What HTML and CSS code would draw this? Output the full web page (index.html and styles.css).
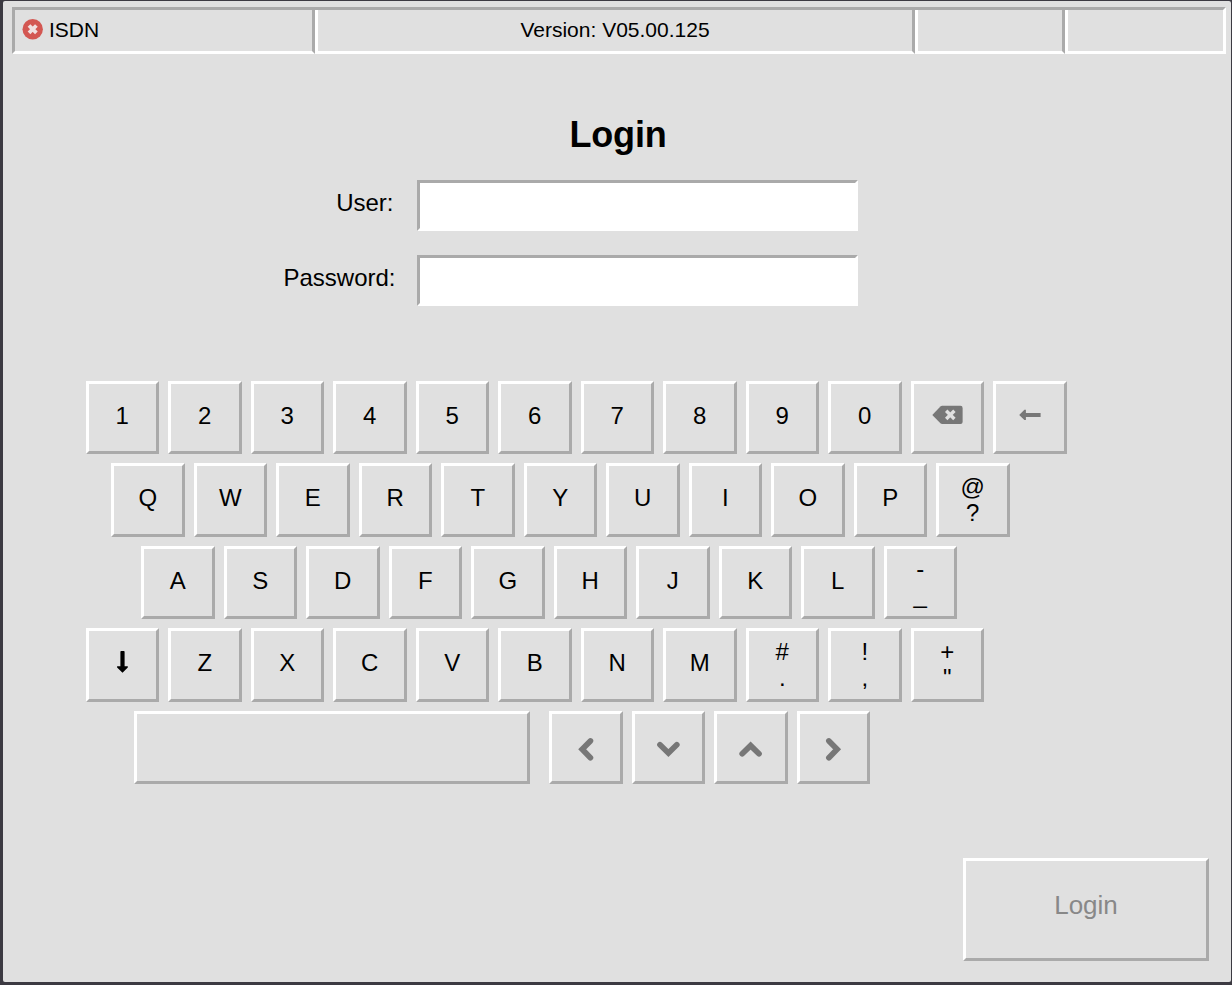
FILE: index.html
```html
<!DOCTYPE html>
<html lang="en">
<head>
<meta charset="utf-8">
<title>Login</title>
<link rel="stylesheet" href="styles.css">
</head>
<body>
<main class="panel">
  <header class="status">
    <div class="cell cell-line">
      <svg class="status-icon" width="21" height="21" viewBox="0 0 21 21"><circle cx="10.7" cy="10.2" r="10.2" fill="#d35752"/><path d="M7 6.5l7.4 7.4M14.4 6.5l-7.4 7.4" stroke="#f0e0e0" stroke-width="3.8"/></svg>
      <span>ISDN</span>
    </div>
    <div class="cell cell-version">Version: V05.00.125</div>
    <div class="cell cell-small"></div>
    <div class="cell cell-last"></div>
  </header>

  <h1 class="title">Login</h1>

  <form class="form">
    <label class="label label-user" for="user">User:</label>
    <input class="field" id="user" type="text">
    <label class="label" for="password">Password:</label>
    <input class="field" id="password" type="password">
  </form>

  <section class="keyboard">
    <div class="row">
      <button class="key">1</button><button class="key">2</button><button class="key">3</button><button class="key">4</button><button class="key">5</button><button class="key">6</button><button class="key">7</button><button class="key">8</button><button class="key">9</button><button class="key">0</button>
      <button class="key key-icon" aria-label="Backspace"><svg class="icon" viewBox="0 0 67 67"><path d="M18.3 30.9L26.4 22.5Q27.2 21.8 28.2 21.8H46.5Q48.6 21.8 48.6 23.9V37.9Q48.6 40 46.5 40H28.2Q27.2 40 26.4 39.3Z" fill="#777"/><path d="M32.2 26.8l8.2 8.2M40.4 26.8l-8.2 8.2" stroke="#e0e0e0" stroke-width="3.4"/></svg></button>
      <button class="key key-icon" aria-label="Enter"><svg class="icon" viewBox="0 0 67 67"><path d="M23.2 30.9L28.4 25.8H29.9V29H44.6V33H29.9V36.1H28.4Z" fill="#777"/></svg></button>
    </div>
    <div class="row row-q">
      <button class="key">Q</button><button class="key">W</button><button class="key">E</button><button class="key">R</button><button class="key">T</button><button class="key">Y</button><button class="key">U</button><button class="key">I</button><button class="key">O</button><button class="key">P</button>
      <button class="key key-dual"><span>@</span><span>?</span></button>
    </div>
    <div class="row row-a">
      <button class="key">A</button><button class="key">S</button><button class="key">D</button><button class="key">F</button><button class="key">G</button><button class="key">H</button><button class="key">J</button><button class="key">K</button><button class="key">L</button>
      <button class="key key-dual"><span>-</span><span>_</span></button>
    </div>
    <div class="row">
      <button class="key key-icon" aria-label="Shift"><svg class="icon" viewBox="0 0 67 67"><path d="M31.4 20.8Q31.4 20 32.2 20H34.8Q35.6 20 35.6 20.8V35.2H38.8V36.6L33.5 41.7L28.1 36.6V35.2H31.4Z" fill="#000"/></svg></button>
      <button class="key">Z</button><button class="key">X</button><button class="key">C</button><button class="key">V</button><button class="key">B</button><button class="key">N</button><button class="key">M</button>
      <button class="key key-dual"><span>#</span><span>.</span></button>
      <button class="key key-dual"><span>!</span><span>,</span></button>
      <button class="key key-dual"><span>+</span><span>"</span></button>
    </div>
    <div class="row row-space">
      <button class="key key-space" aria-label="Space"></button>
      <button class="key key-icon" aria-label="Left"><svg class="icon chevron" viewBox="0 0 67 67"><path d="M38.4 26.9L30.2 35.3L38.4 43.7"/></svg></button>
      <button class="key key-icon" aria-label="Down"><svg class="icon chevron" viewBox="0 0 67 67"><path d="M25 30.8L33.4 39L41.8 30.8"/></svg></button>
      <button class="key key-icon" aria-label="Up"><svg class="icon chevron" viewBox="0 0 67 67"><path d="M25.2 39.8L33.6 31.6L42 39.8"/></svg></button>
      <button class="key key-icon" aria-label="Right"><svg class="icon chevron" viewBox="0 0 67 67"><path d="M28.9 26.9L37.1 35.3L28.9 43.7"/></svg></button>
    </div>
  </section>

  <footer class="actions">
    <button class="login" disabled>Login</button>
  </footer>
</main>
</body>
</html>
```
FILE: styles.css
```css
* {
  box-sizing: border-box;
}

body {
  margin: 0;
  height: 985px;
  padding: 1px 1px 3px 3px;
  overflow: hidden;
  background: #3c3a42;
  font-family: "Liberation Sans", Arial, sans-serif;
  color: #000;
}

.panel {
  display: flex;
  flex-direction: column;
  height: 981px;
  padding: 6px 5px 0 9px;
  border-radius: 2px;
  background: #e0e0e0;
}

/* Status bar */
.status {
  display: flex;
  flex: none;
  height: 47px;
  border-top: 3px solid #aaa;
  border-right: 3px solid #fff;
  font-size: 21px;
  line-height: 24px;
}

.cell {
  border-style: solid;
  border-width: 0 3px 3px;
  border-color: #fff #aaa #fff #fff;
  padding-top: 8px;
}

.cell-line {
  display: flex;
  width: 303px;
  padding-left: 7px;
  gap: 6px;
  border-left-color: #aaa;
}

.status-icon {
  flex: none;
  margin-top: 1px;
}

.cell-version {
  width: 600px;
  text-align: center;
}

.cell-small {
  width: 150px;
}

.cell-last {
  flex: 1;
  border-right: 0;
}

/* Login form */
.title {
  margin: 60px 0 0;
  padding-right: 2px;
  font-size: 36px;
  line-height: 42px;
  letter-spacing: -0.2px;
  text-align: center;
}

.form {
  display: grid;
  grid-template-columns: 383.5px 441px;
  grid-auto-rows: 51px;
  column-gap: 21.5px;
  row-gap: 24px;
  margin-top: 24px;
}

.label {
  padding-top: 9px;
  font-size: 24px;
  line-height: 28px;
  text-align: right;
}

.label-user {
  padding-right: 2px;
}

.field {
  width: 441px;
  height: 51px;
  margin: 0;
  padding: 0 6px;
  border: 3px solid;
  border-color: #aaa #fff #fff #aaa;
  border-radius: 0;
  background: #fff;
  font: 24px "Liberation Sans", Arial, sans-serif;
  outline: none;
}

/* On-screen keyboard */
.keyboard {
  display: flex;
  flex-direction: column;
  gap: 9px;
  margin: 74.75px 0 0 73.75px;
}

.row {
  display: flex;
  gap: 9px;
}

.row-q {
  padding-left: 25.5px;
}

.row-a {
  padding-left: 55.5px;
}

.row-space {
  padding-left: 48.5px;
}

.key,
.login {
  display: flex;
  flex: none;
  align-items: center;
  justify-content: center;
  margin: 0;
  border: 3px solid;
  border-color: #fff #aaa #aaa #fff;
  border-radius: 0;
  background: #e0e0e0;
  color: #000;
  font: 24px/26px "Liberation Sans", Arial, sans-serif;
}

.key {
  width: 73.5px;
  height: 73.5px;
  padding: 0 0.5px 4px 0;
}

.key-dual {
  flex-direction: column;
  padding-bottom: 1px;
}

.key-icon {
  align-items: flex-start;
  justify-content: flex-start;
  padding: 0;
}

.key-space {
  width: 395.5px;
  margin-right: 10.5px;
}

.icon {
  flex: none;
  width: 67px;
  height: 67px;
}

.chevron {
  fill: none;
  stroke: #777;
  stroke-width: 5.7;
  stroke-linecap: round;
}

/* Footer */
.actions {
  display: flex;
  justify-content: flex-end;
  margin-top: 73.75px;
  padding-right: 17px;
}

.login {
  width: 246px;
  height: 103px;
  padding: 0 0 9px;
  color: #888;
  font-size: 26px;
}
```
